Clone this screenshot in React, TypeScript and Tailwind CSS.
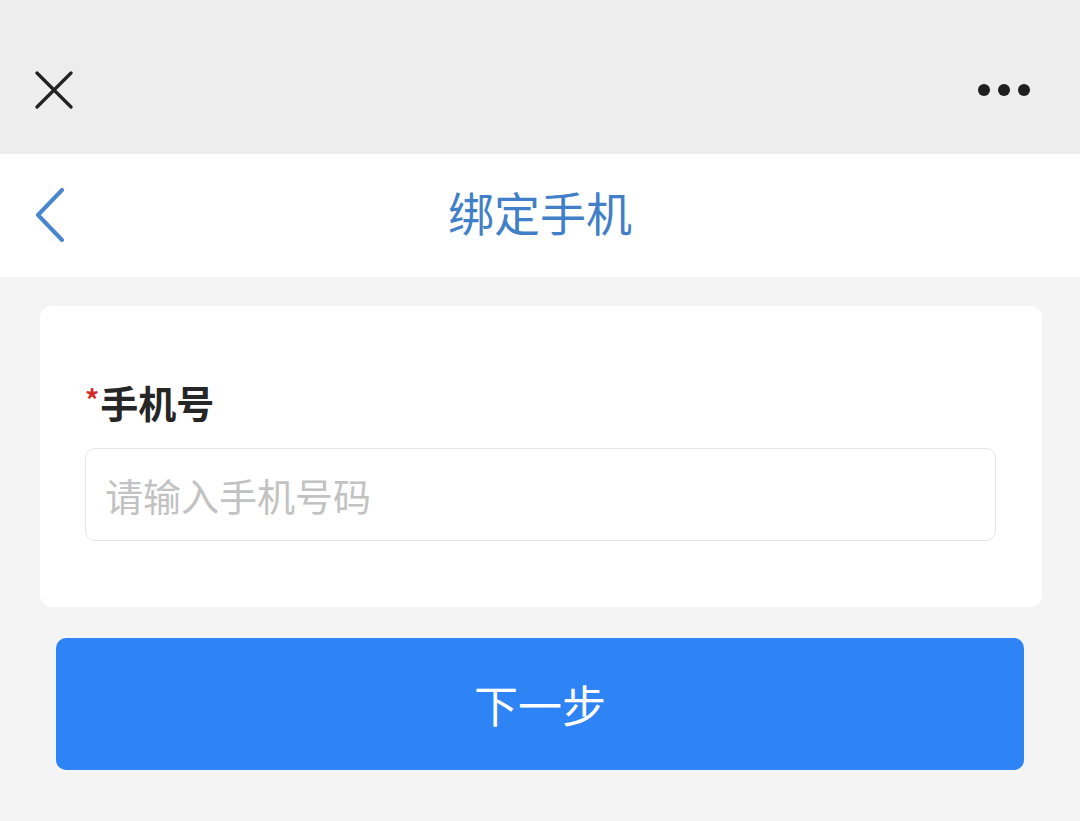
export default function App() {
    return (
        <div className="w-[1080px] h-[821px] bg-[#f4f4f4] flex flex-col font-['Noto_Sans_CJK_SC',sans-serif]">
            <div className="h-[154px] bg-[#ededed] flex items-center justify-between pl-[35px] pr-[50px] pt-[26px]">
                <svg width="38" height="38" viewBox="0 0 38 38" className="text-[#222]">
                    <path d="M2 2 L36 36 M36 2 L2 36" stroke="currentColor" strokeWidth="3.2" strokeLinecap="round" />
                </svg>
                <div className="flex items-center gap-[8px]">
                    <span className="w-[12px] h-[12px] rounded-full bg-[#1e1e1e]" />
                    <span className="w-[12px] h-[12px] rounded-full bg-[#1e1e1e]" />
                    <span className="w-[12px] h-[12px] rounded-full bg-[#1e1e1e]" />
                </div>
            </div>

            <div className="h-[123px] bg-white relative flex items-center justify-center pb-[10px]">
                <svg width="32" height="56" viewBox="0 0 32 56" className="absolute left-[34px] top-1/2 -translate-y-1/2 text-[#4a86d0]">
                    <path d="M28 2 L4 27 L28 52" fill="none" stroke="currentColor" strokeWidth="4" strokeLinecap="round" strokeLinejoin="round" />
                </svg>
                <span className="text-[46px] leading-none text-[#4180c8]">绑定手机</span>
            </div>

            <div className="pl-[40px] pr-[38px] pt-[29px]">
                <div className="bg-white rounded-[12px] pl-[45px] pr-[46px] pt-[77px] pb-[66px]">
                    <div className="flex items-start text-[38px] font-bold leading-none text-[#262626]">
                        <span className="text-[#d12b2b] text-[28px] mt-[2px] mr-[1px]">*</span>
                        <span>手机号</span>
                    </div>
                    <input
                        placeholder="请输入手机号码"
                        className="mt-[27px] w-full h-[93px] border border-[#e6e6e6] rounded-[10px] px-[19px] text-[38px] placeholder:text-[#c2c2c2] outline-none"
                    />
                </div>
            </div>

            <div className="px-[56px] pt-[31px]">
                <button className="w-full h-[132px] bg-[#2f84f5] rounded-[10px] text-white text-[44px]">下一步</button>
            </div>
        </div>
    )
}
